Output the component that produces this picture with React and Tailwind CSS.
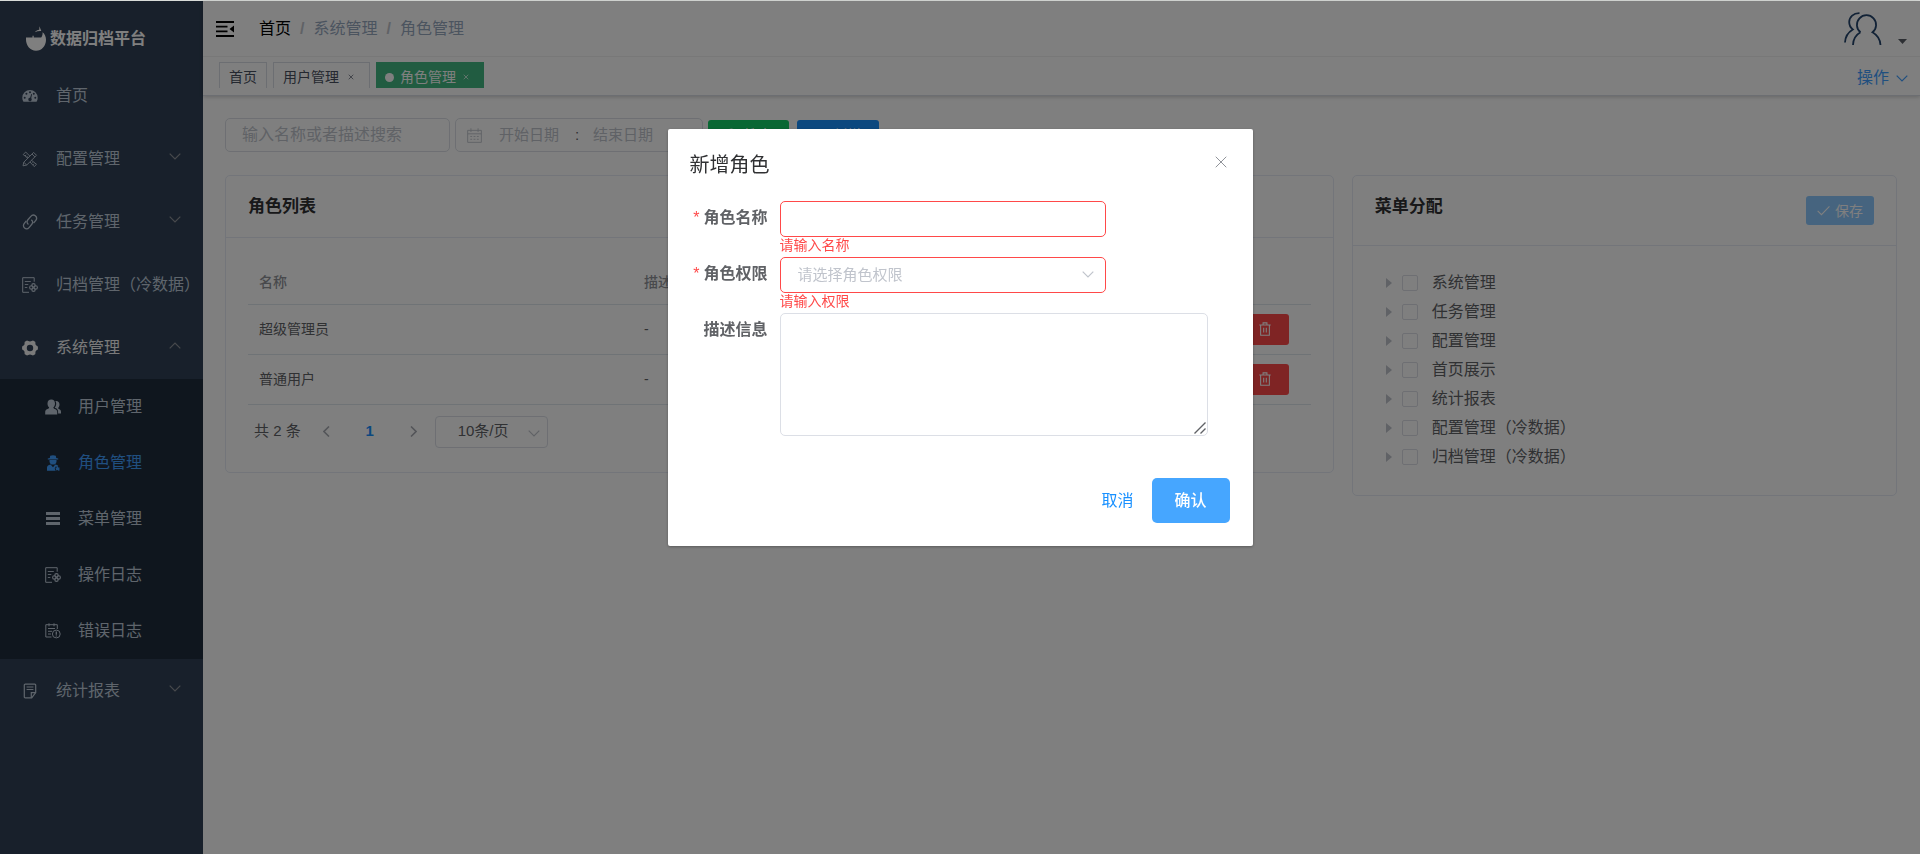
import React, { useState } from 'react';
import { X } from 'lucide-react';

/* ---------- icons ---------- */

function Svg({ size = 16, className = '', children, ...rest }) {
    return (
        <svg width={size} height={size} viewBox="0 0 16 16" fill="none" stroke="currentColor" className={`shrink-0 ${className}`} aria-hidden="true" {...rest}>
            {children}
        </svg>
    );
}

const Chevron = ({ up, className = '' }) => (
    <svg width="12" height="7" viewBox="0 0 12 7" fill="none" stroke="currentColor" strokeWidth="1.200" className={`shrink-0 ${className}`} aria-hidden="true">
        <path d={up ? 'M.7 6.300 6 1l5.300 5.300' : 'M.7.700 6 6 11.300.700'} />
    </svg>
);

const DashboardIcon = () => (
    <Svg>
        <path fill="currentColor" stroke="none" fillRule="evenodd" d="M8 2a7.7 7.7 0 0 0-7.7 7.7c0 1.3.3 2.6 1 3.7.1.2.3.3.6.3h12.200c.3 0 .5-.1.6-.3.7-1.100 1-2.400 1-3.700A7.700 7.700 0 0 0 8 2ZM2.700 8.700a1 1 0 1 1 0 2 1 1 0 0 1 0-2Zm1.700-3.900a1 1 0 1 1 0 2 1 1 0 0 1 0-2ZM8 3.200a1 1 0 1 1 0 2 1 1 0 0 1 0-2Zm1.300 2.900.8.2-.9 4c.5.4.7 1 .4 1.700a1.700 1.700 0 1 1-1.500-2.200l1.200-3.700Zm2.500-1.300a1 1 0 1 1 0 2 1 1 0 0 1 0-2Zm1.500 3.900a1 1 0 1 1 0 2 1 1 0 0 1 0-2Z" />
    </Svg>
);
const ToolsIcon = () => (
    <Svg strokeWidth=".9">
        <path d="m1 14.800.8-3.600L11.600 1.400l2.900 2.900-9.800 9.800L1 14.800ZM10 3l2.900 2.900M1.800 11.200l2.900 2.900" />
        <path d="m6 7.100L1.200 3.600 3.700 1 8 5.300M9.500 9.300l5 4-2.300 2.300L8 11M3 5l1.200-1.200M12 12.800l-1.200 1.200M4.500 6.400l1-1M10.600 11.300l-.9.9" />
    </Svg>
);
const LinkIcon = () => (
    <Svg strokeWidth="1.300">
        <path d="M6.500 10.300c-1.600-.8-1.900-3-.6-4.500l2.700-3.200c1.300-1.500 3.300-1.900 4.700-.8 1.500 1.200 1.500 3.300.3 4.800l-2.100 2.600" />
        <path d="M9.200 5.800c1.600.8 1.900 3 .6 4.500l-2.500 3c-1.300 1.500-3.300 1.900-4.700.8-1.500-1.200-1.500-3.300-.3-4.800l2-2.500" />
    </Svg>
);
const DocGearIcon = () => (
    <Svg>
        <path d="M7 15.300H.7V.7h11.500v4" />
        <path d="M2.800 4.500h6M2.800 7.500h3.500M2.800 10.500h2.500" strokeWidth=".9" />
        <g strokeWidth="1.100">
            <circle cx="11.500" cy="8.300" r="1.700" />
            <circle cx="11.500" cy="12.700" r="1.700" />
            <circle cx="9.300" cy="10.500" r="1.700" />
            <circle cx="13.700" cy="10.500" r="1.700" />
        </g>
    </Svg>
);
const GearIcon = () => (
    <Svg>
        <path fill="currentColor" stroke="none" fillRule="evenodd" d="M5 .5c.9 0 1.600.9 3 .9s2.100-.9 3-.9l2.200 1.300c.5.800-.1 1.800.5 3 .7 1.100 1.900 1.100 2.200 1.900v2.600c-.3.800-1.500.8-2.200 1.900-.6 1.200 0 2.200-.5 3L11 15.500c-.9 0-1.600-.9-3-.9s-2.100.9-3 .9l-2.200-1.300c-.5-.8.1-1.800-.5-3C1.600 10.100.4 10.100.1 9.300V6.700c.3-.8 1.500-.8 2.200-1.900.6-1.200 0-2.200.5-3L5 .5Zm3 4.300a3.200 3.200 0 1 0 0 6.400 3.200 3.200 0 0 0 0-6.400Z" />
    </Svg>
);
const PeopleIcon = () => (
    <Svg>
        <path fill="currentColor" stroke="none" d="M6.300.5c2.300 0 3.700 1.600 3.700 3.900 0 1.700-.6 3-1.600 3.900 0 1 .3 1.300 1.500 1.800 1.700.7 2.300 1.600 2.300 3.200v2.200H.2v-2.200c0-1.600.6-2.500 2.300-3.200 1.200-.5 1.600-.8 1.600-1.800-1-.9-1.600-2.200-1.600-3.900C2.500 2.100 4 .5 6.300.5Z" />
        <path fill="currentColor" stroke="none" d="M10.300 2c2.400-.5 4.200 1 4.200 3.500 0 1.400-.5 2.500-1.300 3.300 0 .9.300 1.100 1.200 1.500 1.100.5 1.600 1.300 1.600 2.700v1.500h-2.900v-1.700c0-1.800-.9-3-2.700-3.700-.5-.2-.6-.4-.6-.6.9-1.100 1.400-2.500 1.400-4.100 0-.9-.3-1.700-.9-2.400Z" />
    </Svg>
);
const RoleIcon = () => (
    <Svg>
        <g fill="currentColor" stroke="none">
            <path d="M5.200.8 8 .2l2.800.6.4 2.200 2 .5v.9H2.800v-.9l2-.5.4-2.200Z" />
            <path d="M4.500 5.100h7v1.300A3.400 3.400 0 0 1 8 9.500a3.400 3.400 0 0 1-3.500-3.100V5.100Z" />
            <path d="M2 15.800v-3.300c0-1.700 1.500-2.700 3.600-3.100L8 12.200l2.300-2.800c1.300.2 2.400.7 3 1.500l-1 1-1.600-.5-1 2.400 1 2H2Z" />
            <path d="m12.500 11.500.9 1.100 1.400.2-.6 1.200.6 1.300-1.400.5-.9-.8-1.300.6-.3-1.500-.5-1.100 1.200-.6.9-.9Z" />
        </g>
    </Svg>
);
const MenuBarsIcon = () => (
    <Svg>
        <g fill="currentColor" stroke="none">
            <rect x="1" y="1" width="14" height="3" />
            <rect x="1" y="6" width="14" height="3" />
            <rect x="1" y="11" width="14" height="3" />
        </g>
    </Svg>
);
const ErrorLogIcon = () => (
    <Svg>
        <path d="M6.500 14H.8V1.700h11.500V6M4 .3v3M9 .3v3" />
        <path d="M3 5.500h7M3 8.300h4M3 11h3" />
        <circle cx="11.300" cy="11" r="3.900" />
        <path d="M11.300 8.500v3.200M11.300 12.500v1" strokeWidth="1.300" />
    </Svg>
);
const NoteIcon = () => (
    <Svg strokeWidth="1.200">
        <path d="M7.500 14.800H3.200c-.5 0-.9-.4-.9-.9V2c0-.5.4-.9.9-.9h9.600c.5 0 .9.400.9.900v7.500l-4 5.300H7.500Z" />
        <path d="M13.500 9.700H9.300v5M4.600 4h6.800M4.600 6.500h6.800" />
    </Svg>
);
const TrashIcon = () => (
    <Svg size={14} strokeWidth="1.200">
        <path d="M1.500 3.500h13M5.800 3.300V1h4.400v2.300M3 3.800v11.400h10V3.800M6.500 6.500v5.500M9.500 6.500v5.500" />
    </Svg>
);
const EditIcon = () => (
    <Svg size={14} strokeWidth="1.200">
        <path d="M8 2H2v12h12V8M6 10l.5-2.500L13 1l2 2-6.500 6.500L6 10Z" />
    </Svg>
);
const CalendarIcon = () => (
    <Svg size={15}>
        <path d="M.7 2.500h14.600v12.800H.7zM.7 6.200h14.600M4.200.3v4M11.800.3v4M3.500 9h2M7 9h2M10.500 9h2M3.500 12h2M7 12h2M10.500 12h2" />
    </Svg>
);
const SearchIcon = () => (
    <Svg size={14} strokeWidth="1.200"><circle cx="7.300" cy="7.300" r="6" /><path d="m11.700 11.700 3.500 3.500" /></Svg>
);
const PlusIcon = () => <Svg size={14} strokeWidth="1.200"><path d="M8 1v14M1 8h14" /></Svg>;
const CheckIcon = () => <Svg size={13} strokeWidth="1.300"><path d="m.8 8.500 4.700 4.700L15.300 3" /></Svg>;

const LogoIcon = () => (
    <svg width="20" height="25" viewBox="0 0 20 25" fill="currentColor" className="shrink-0" aria-hidden="true">
        <path d="M0 11.500h6.500V9.800h1.200v1.700h7.500c1.300-1.800 1.600-3.600 1.300-5.300 2.200 1.500 3.500 4.300 3.500 7.600 0 6.200-4.300 11-10 11S0 19.500 0 13.800v-2.300Z" />
        <path d="M8.800 6.200c1.200-1.500 2.700-2.200 4.500-2.400L13.400.3l1.900 4.700c-2.300-.2-4.400.2-6.500 1.200Z" />
    </svg>
);

const AvatarIcon = () => (
    <svg width="38" height="34" viewBox="0 0 38 34" fill="none" stroke="#24456c" strokeWidth="1.800" aria-hidden="true">
        <path d="M16.500 20.300a9.600 9.600 0 1 1 12 0c4.800 2.800 7.700 7.300 8 12.700M16.500 20.300C11.700 23 9.200 27.500 9 33" />
        <path d="M15.500 1.200C9.500 1 5.300 5 5.200 10c0 3.200 1.400 5.700 3.600 7.400C4 20.300 1.200 25 1 30.500" />
    </svg>
);

const FoldIcon = () => (
    <svg width="18" height="16" viewBox="0 0 18 16" aria-hidden="true">
        <path d="M0 0h18v2H0zM0 4.800h11.500v1.800H0zM0 9.400h11.500v1.800H0zM0 14h18v2H0zM18 4.500v7L13.500 8z" />
    </svg>
);

/* ---------- data ---------- */

const menus = [
    { label: '首页', icon: DashboardIcon },
    { label: '配置管理', icon: ToolsIcon, arrow: true },
    { label: '任务管理', icon: LinkIcon, arrow: true },
    { label: '归档管理（冷数据）', icon: DocGearIcon },
    {
        label: '系统管理', icon: GearIcon, arrow: true, open: true,
        children: [
            { label: '用户管理', icon: PeopleIcon },
            { label: '角色管理', icon: RoleIcon, active: true },
            { label: '菜单管理', icon: MenuBarsIcon },
            { label: '操作日志', icon: DocGearIcon },
            { label: '错误日志', icon: ErrorLogIcon },
        ],
    },
    { label: '统计报表', icon: NoteIcon, arrow: true },
];

const roles = [
    { name: '超级管理员', desc: '-' },
    { name: '普通用户', desc: '-' },
];

const tree = ['系统管理', '任务管理', '配置管理', '首页展示', '统计报表', '配置管理（冷数据）', '归档管理（冷数据）'];

/* ---------- layout ---------- */

function Sidebar() {
    return (
        <aside className="w-[203px] shrink-0 bg-[#304156] text-[#bfcbd9] overflow-hidden">
            <div className="h-[63px] pt-3 pl-[26px] flex items-center gap-1 text-white">
                <LogoIcon />
                <h1 className="font-bold text-base whitespace-nowrap">数据归档平台</h1>
            </div>
            <nav>
                {menus.map((m) => (
                    <div key={m.label}>
                        <a href="#" className={`h-[63px] px-[22px] flex items-center whitespace-nowrap ${m.open ? 'text-[#f4f4f5]' : ''}`}>
                            <m.icon />
                            <span className="ml-[18px]">{m.label}</span>
                            {m.arrow && <Chevron up={m.open} className="ml-auto mb-1 text-[#909399]" />}
                        </a>
                        {m.children && (
                            <div className="bg-[#1f2d3d]">
                                {m.children.map((c) => (
                                    <a href="#" key={c.label} className={`h-14 pl-[45px] flex items-center ${c.active ? 'text-[#409eff]' : ''}`}>
                                        <c.icon />
                                        <span className="ml-[17px]">{c.label}</span>
                                    </a>
                                ))}
                            </div>
                        )}
                    </div>
                ))}
            </nav>
        </aside>
    );
}

function Navbar() {
    return (
        <header className="border-b border-[#d8dce5] shadow-[0_1px_4px_rgba(0,0,0,0.2)]">
            <div className="h-[55px] pl-[13px] pr-[13px] flex items-center">
                <button type="button" aria-label="折叠菜单"><FoldIcon /></button>
                <nav className="ml-[25px] flex items-center text-[#97a8be]">
                    <a href="#" className="text-black">首页</a>
                    <span className="mx-[9px] text-[#c0c4cc] font-bold">/</span>
                    <span>系统管理</span>
                    <span className="mx-[9px] text-[#c0c4cc] font-bold">/</span>
                    <span>角色管理</span>
                </nav>
                <button type="button" aria-label="用户" className="ml-auto flex items-end gap-4">
                    <AvatarIcon />
                    <svg width="9" height="5" viewBox="0 0 9 5" className="mb-[2px]"><path d="M0 0h9L4.500 5z" fill="#5a5e66" /></svg>
                </button>
            </div>
            <div className="h-[39px] border-t border-[#f0f0f0] flex items-start justify-between pl-4 pr-3">
                <div className="h-[31px] pt-[5px] overflow-hidden flex items-start gap-[6px] text-sm text-[#495060]">
                    <a href="#" className="h-[30px] px-[9px] border border-[#d8dce5] flex items-center">首页</a>
                    <a href="#" className="h-[30px] pl-[9px] pr-[14px] border border-[#d8dce5] flex items-center gap-2">
                        用户管理
                        <X size={8} strokeWidth={2} />
                    </a>
                    <a href="#" className="h-[30px] pl-[9px] pr-[14px] bg-[#42b983] text-white flex items-center gap-[6px]">
                        <span className="size-[9px] rounded-full bg-white"></span>
                        角色管理
                        <X size={8} strokeWidth={2} />
                    </a>
                </div>
                <button type="button" className="mt-[9px] flex items-center gap-[7px] text-[#409eff]">
                    操作 <Chevron />
                </button>
            </div>
        </header>
    );
}

function Filters() {
    return (
        <form className="flex items-center gap-[5px]">
            <input aria-label="搜索" placeholder="输入名称或者描述搜索" className="w-[225px] h-[34px] px-4 border border-[#dcdfe6] rounded-[5px] placeholder:text-[#c0c4cc]" />
            <div className="w-[248px] h-[34px] pl-[11px] border border-[#dcdfe6] rounded-[5px] flex items-center text-[15px] text-[#c0c4cc]">
                <CalendarIcon />
                <input aria-label="开始日期" placeholder="开始日期" className="ml-[9px] w-[78px] px-2 placeholder:text-[#c0c4cc]" />
                <span className="w-4 text-center text-[#606266]">:</span>
                <input aria-label="结束日期" placeholder="结束日期" className="w-20 px-2 placeholder:text-[#c0c4cc]" />
            </div>
            <button type="button" className="w-[81px] h-[30px] rounded-[3px] bg-[#13ce66] text-white text-sm flex items-center justify-center gap-[5px]"><SearchIcon />搜索</button>
            <button type="button" className="ml-[3px] w-[82px] h-[30px] rounded-[3px] bg-[#1890ff] text-white text-sm flex items-center justify-center gap-[5px]"><PlusIcon />新增</button>
        </form>
    );
}

function RoleCard() {
    return (
        <section className="col-span-2 border border-[#e6ebf5] rounded-[5px]">
            <div className="px-[22px] py-5 border-b border-[#e6ebf5]">
                <h2 className="text-[17px] leading-[21px] font-bold text-[#303133]">角色列表</h2>
            </div>
            <div className="px-[22px] py-[22px]">
                <table className="w-full table-fixed text-sm text-[#606266]">
                    <thead>
                        <tr className="h-11 border-b border-[#dfe6ec] text-left text-[#909399]">
                            <th className="w-[385px] px-[11px] font-medium">名称</th>
                            <th className="px-[11px] font-medium">描述</th>
                            <th className="w-[146px] text-center font-medium">操作</th>
                        </tr>
                    </thead>
                    <tbody>
                        {roles.map((r) => (
                            <tr key={r.name} className="h-[50px] border-b border-[#dfe6ec]">
                                <td className="px-[11px]">{r.name}</td>
                                <td className="px-[11px]">{r.desc}</td>
                                <td>
                                    <div className="flex justify-center gap-[6px] text-white">
                                        <button type="button" aria-label="编辑" className="w-12 h-[31px] rounded-[3px] bg-[#1890ff] flex items-center justify-center"><EditIcon /></button>
                                        <button type="button" aria-label="删除" className="w-12 h-[31px] rounded-[3px] bg-[#ff4949] flex items-center justify-center"><TrashIcon /></button>
                                    </div>
                                </td>
                            </tr>
                        ))}
                    </tbody>
                </table>
                <div className="mt-[11px] mb-[2px] pl-[6px] flex items-center text-[15px] text-[#606266]">
                    <span>共 2 条</span>
                    <button type="button" aria-label="上一页" className="ml-[22px] text-[#a8abb2]">
                        <svg width="7" height="11" viewBox="0 0 7 11" fill="none" stroke="currentColor" strokeWidth="1.600"><path d="M6 .5l-5 5 5 5" /></svg>
                    </button>
                    <button type="button" className="w-8 mx-6 font-bold text-[#1890ff]">1</button>
                    <button type="button" aria-label="下一页" className="text-[#a8abb2]">
                        <svg width="7" height="11" viewBox="0 0 7 11" fill="none" stroke="currentColor" strokeWidth="1.600"><path d="M1 .5l5 5-5 5" /></svg>
                    </button>
                    <div className="relative ml-[18px]">
                        <select aria-label="每页条数" className="block w-[113px] h-8 pl-[22px] appearance-none border border-[#dcdfe6] rounded-[4px]">
                            <option>10条/页</option>
                        </select>
                        <Chevron className="absolute right-2 top-[14px] text-[#c0c4cc] pointer-events-none" />
                    </div>
                </div>
            </div>
        </section>
    );
}

function MenuCard() {
    return (
        <section className="border border-[#e6ebf5] rounded-[5px]">
            <div className="px-[22px] py-5 border-b border-[#e6ebf5] flex items-start justify-between">
                <h2 className="text-[17px] leading-[21px] font-bold text-[#303133]">菜单分配</h2>
                <button type="button" className="w-[68px] h-[29px] rounded-[3px] bg-[#8cc8ff] text-white text-sm flex items-center justify-center gap-[5px]">
                    <CheckIcon />保存
                </button>
            </div>
            <ul className="px-[22px] pt-[22px] pb-6 text-[#606266]">
                {tree.map((t) => (
                    <li key={t} className="h-[29px] pl-[11px] flex items-center">
                        <svg width="6" height="10" viewBox="0 0 6 10" fill="#c0c4cc" aria-hidden="true"><path d="M0 0l6 5-6 5z" /></svg>
                        <label className="ml-[10px] flex items-center gap-[14px]">
                            <input type="checkbox" className="appearance-none size-4 border border-[#dcdfe6] rounded-[2px]" />
                            {t}
                        </label>
                    </li>
                ))}
            </ul>
        </section>
    );
}

function FormItem({ id, label, required, error, children }) {
    return (
        <div className="flex items-start">
            <label htmlFor={id} className="w-[90px] shrink-0 pr-3 leading-[34px] text-right font-bold text-[#606266] whitespace-nowrap">
                {required && <span className="mr-1 font-normal text-[#ff4949]">*</span>}
                {label}
            </label>
            <div className="flex-1">
                {children}
                {error && <p className="h-5 text-sm leading-4 text-[#ff4949]">{error}</p>}
            </div>
        </div>
    );
}

function RoleDialog() {
    const [form, setForm] = useState({ name: '', level: '', desc: '' });
    const update = (key) => (e) => setForm({ ...form, [key]: e.target.value });

    return (
        <div className="fixed inset-x-0 bottom-0 top-px bg-black/50 flex items-start justify-center pt-[15vh]">
            <div role="dialog" aria-label="新增角色" className="w-[585px] bg-white rounded-[2px] shadow-[0_1px_3px_rgba(0,0,0,0.3)]">
                <div className="px-[22px] pt-[23px] flex items-start justify-between">
                    <h3 className="text-xl leading-[27px] text-[#303133]">新增角色</h3>
                    <button type="button" aria-label="关闭" className="text-[#909399]"><X size={20} strokeWidth={1.2} /></button>
                </div>
                <form className="mt-[22px] px-[22px]">
                    <FormItem id="name" label="角色名称" required error="请输入名称">
                        <input id="name" value={form.name} onChange={update('name')} className="block w-[326px] h-9 px-[17px] border border-[#ff4949] rounded-[5px]" />
                    </FormItem>
                    <FormItem id="level" label="角色权限" required error="请输入权限">
                        <div className="relative w-[326px]">
                            <select id="level" value={form.level} onChange={update('level')} className="block w-full h-9 pl-[17px] appearance-none border border-[#ff4949] rounded-[5px] text-[15px] text-[#c0c4cc]">
                                <option value="" disabled>请选择角色权限</option>
                            </select>
                            <Chevron className="absolute right-3 top-[14px] text-[#c0c4cc] pointer-events-none" />
                        </div>
                    </FormItem>
                    <FormItem id="desc" label="描述信息">
                        <div className="relative w-[428px]">
                            <textarea id="desc" value={form.desc} onChange={update('desc')} className="block w-full h-[123px] px-[17px] py-[6px] resize-none border border-[#dcdfe6] rounded-[5px]" />
                            <svg width="12" height="12" viewBox="0 0 12 12" fill="none" stroke="#606266" strokeWidth="1.400" className="absolute right-[2px] bottom-[2px] pointer-events-none" aria-hidden="true">
                                <path d="M.5 11.500l11-11M6.500 11.500l5-5" />
                            </svg>
                        </div>
                    </FormItem>
                </form>
                <div className="mt-[42px] px-[23px] pb-[23px] flex items-center justify-end gap-[18px]">
                    <button type="button" className="text-[#1890ff]">取消</button>
                    <button type="button" className="w-[78px] h-[45px] rounded-[5px] bg-[#46a6ff] text-white font-medium">确认</button>
                </div>
            </div>
        </div>
    );
}

export default function App() {
    return (
        <div className="min-h-screen flex border-t border-[#d9dcd9] bg-white text-base font-['Liberation_Sans','Noto_Sans_CJK_SC',sans-serif]">
            <Sidebar />
            <div className="flex-1 min-w-0">
                <Navbar />
                <main className="pl-[22px] pr-[23px] pt-[22px]">
                    <Filters />
                    <div className="mt-[23px] grid grid-cols-3 gap-[18px] items-start">
                        <RoleCard />
                        <MenuCard />
                    </div>
                </main>
            </div>
            <RoleDialog />
        </div>
    );
}
